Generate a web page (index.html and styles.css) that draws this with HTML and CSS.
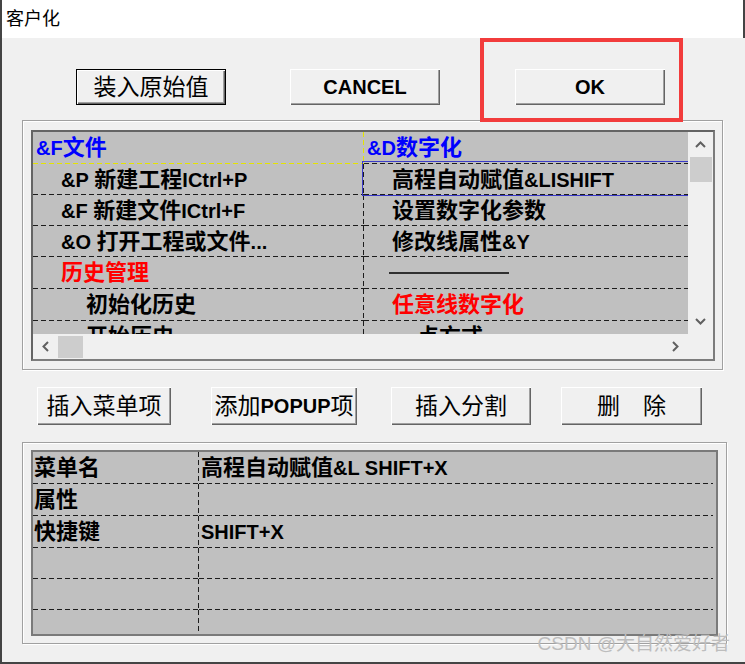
FILE: index.html
```html
<!DOCTYPE html>
<html lang="zh-CN">
<head>
    <meta charset="UTF-8">
    <meta name="viewport" content="width=device-width, initial-scale=1.0">
    <title>客户化</title>
    <link rel="stylesheet" href="styles.css">
</head>
<body>
    <div class="window">
        <div class="titlebar">客户化</div>
        <div class="dialog">
            <div class="top-actions">
                <button class="btn btn-default">装入原始值</button>
                <button class="btn btn-latin">CANCEL</button>
                <button class="btn btn-latin btn-ok">OK</button>
            </div>

            <div class="group group-menu">
                <div class="listbox">
                    <div class="menu-grid">
                        <div class="cell cell-l head lv0 blue"><span class="en">&amp;F</span>文件</div>
                        <div class="cell lv0 blue"><span class="en">&amp;D</span>数字化</div>

                        <div class="cell cell-l lv1"><span class="en">&amp;P&nbsp;</span>新建工程<span class="en">ICtrl+P</span></div>
                        <div class="cell lv1 focused">高程自动赋值<span class="en">&amp;LISHIFT</span></div>

                        <div class="cell cell-l lv1"><span class="en">&amp;F&nbsp;</span>新建文件<span class="en">ICtrl+F</span></div>
                        <div class="cell lv1">设置数字化参数</div>

                        <div class="cell cell-l lv1"><span class="en">&amp;O&nbsp;</span>打开工程或文件<span class="en">...</span></div>
                        <div class="cell lv1">修改线属性<span class="en">&amp;Y</span></div>

                        <div class="cell cell-l lv1 red">历史管理</div>
                        <div class="cell lv1"><span class="sep-line"></span></div>

                        <div class="cell cell-l lv2">初始化历史</div>
                        <div class="cell lv1 red">任意线数字化</div>

                        <div class="cell cell-l lv2">开始历史</div>
                        <div class="cell lv2">点方式</div>
                    </div>
                    <div class="vscroll">
                        <div class="arrow">
                            <svg width="11" height="7" viewBox="0 0 11 7"><path d="M1 6 L5.5 1.5 L10 6" fill="none" stroke="#606060" stroke-width="2"/></svg>
                        </div>
                        <div class="thumb"></div>
                        <div class="track"></div>
                        <div class="arrow">
                            <svg width="11" height="7" viewBox="0 0 11 7"><path d="M1 1 L5.5 5.5 L10 1" fill="none" stroke="#606060" stroke-width="2"/></svg>
                        </div>
                    </div>
                    <div class="hscroll">
                        <div class="arrow">
                            <svg width="7" height="11" viewBox="0 0 7 11"><path d="M6 1 L1.5 5.5 L6 10" fill="none" stroke="#606060" stroke-width="2"/></svg>
                        </div>
                        <div class="thumb"></div>
                        <div class="track"></div>
                        <div class="arrow">
                            <svg width="7" height="11" viewBox="0 0 7 11"><path d="M1 1 L5.5 5.5 L1 10" fill="none" stroke="#606060" stroke-width="2"/></svg>
                        </div>
                    </div>
                    <div class="corner"></div>
                </div>
            </div>

            <div class="mid-actions">
                <button class="btn btn-tall btn-insert">插入菜单项</button>
                <button class="btn btn-tall btn-popup">添加<span class="en-bold">POPUP</span>项</button>
                <button class="btn btn-tall btn-split">插入分割</button>
                <button class="btn btn-tall btn-delete">删　除</button>
            </div>

            <div class="group group-props">
                <div class="props-grid">
                    <div class="pcell pcell-l">菜单名</div>
                    <div class="pcell">高程自动赋值<span class="en">&amp;L SHIFT+X</span></div>

                    <div class="pcell pcell-l">属性</div>
                    <div class="pcell"></div>

                    <div class="pcell pcell-l">快捷键</div>
                    <div class="pcell"><span class="en">SHIFT+X</span></div>

                    <div class="pcell pcell-l"></div>
                    <div class="pcell"></div>

                    <div class="pcell pcell-l"></div>
                    <div class="pcell"></div>

                    <div class="pcell pcell-l last"></div>
                    <div class="pcell last"></div>
                </div>
            </div>

            <!-- annotation box drawn over the OK button -->
            <div class="highlight"></div>
            <div class="watermark">CSDN @大自然爱好者</div>
        </div>
    </div>
</body>
</html>
```

FILE: styles.css
```css
* {
    margin: 0;
    padding: 0;
    box-sizing: border-box;
}

body {
    background: #f0f0f0;
    font-family: "Liberation Sans", "Noto Sans CJK SC", sans-serif;
}

.window {
    width: 745px;
    height: 664px;
    display: flex;
    flex-direction: column;
    border-left: 2px solid #444;
    border-bottom: 2px solid #444;
    overflow: hidden;
}

.titlebar {
    height: 38px;
    flex: none;
    background: #fff;
    border-right: 2px solid #444;
    padding-left: 4px;
    font-size: 18px;
    line-height: 38px;
    color: #000;
}

.dialog {
    flex: 1;
    position: relative;
    background: #f0f0f0;
}

/* buttons */
.btn {
    width: 150px;
    height: 36px;
    flex: none;
    background: #f0f0f0;
    border: none;
    box-shadow: inset 1px 1px #fff, inset -1px -1px #646464, inset -2px -2px #a0a0a0;
    font-family: "Liberation Sans", "Noto Sans CJK SC", sans-serif;
    font-size: 23px;
    line-height: 1;
    color: #000;
    white-space: nowrap;
    display: flex;
    align-items: center;
    justify-content: center;
}

.btn-default {
    border: 1px solid #000;
}

.btn-latin {
    font-weight: bold;
    font-size: 20px;
}

.en-bold {
    font-weight: bold;
    font-size: 20px;
}

.top-actions {
    display: flex;
    gap: 64px;
    padding: 31px 0 0 74px;
}

.btn-ok {
    margin-left: 11px;
}

.mid-actions {
    display: flex;
    margin-top: 17px;
    padding-left: 35px;
}

.btn-tall {
    height: 38px;
}

.btn-insert { width: 134px; }
.btn-popup { width: 146px; margin-left: 40px; }
.btn-split { width: 140px; margin-left: 34px; }
.btn-delete { width: 141px; margin-left: 30px; }

/* etched group frames */
.group {
    margin-left: 20px;
    border: 1px solid #a0a0a0;
    box-shadow: 1px 1px 0 #fff, inset 1px 1px 0 #fff;
}

.group-menu {
    width: 701px;
    margin-top: 15px;
    padding: 9px 0 8px 8px;
}

.group-props {
    width: 705px;
    margin-top: 17px;
    padding: 7px 0 7px 8px;
}

/* menu list */
.listbox {
    width: 684px;
    height: 231px;
    border: 2px solid #7c7c7c;
    border-top-color: #646464;
    border-left-color: #646464;
    display: grid;
    grid-template-columns: 1fr 25px;
    grid-template-rows: 1fr 25px;
    background: #f0f0f0;
}

.menu-grid {
    overflow: hidden;
    background: #c0c0c0;
    display: grid;
    grid-template-columns: 331px 1fr;
    grid-template-rows: 32px repeat(3, 31px) repeat(3, 32px);
}

.cell, .pcell {
    --line: #1c1c1c;
    display: flex;
    align-items: center;
    white-space: nowrap;
    font-family: "Liberation Sans", "Noto Sans CJK SC", sans-serif;
    font-weight: bold;
    font-size: 22px;
    line-height: 1;
    color: #000;
    background: repeating-linear-gradient(90deg, var(--line) 0 5px, transparent 5px 8px) left bottom / 100% 1px no-repeat;
}

.cell-l, .pcell-l {
    background:
        repeating-linear-gradient(180deg, var(--line) 0 5px, transparent 5px 8px) right top / 1px 100% no-repeat,
        repeating-linear-gradient(90deg, var(--line) 0 5px, transparent 5px 8px) left bottom / 100% 1px no-repeat;
}

.head.cell-l {
    --line: #e4e400;
}

.en {
    font-size: 20px;
}

.lv0 { padding-left: 3px; }
.lv1 { padding-left: 28px; }
.lv2 { padding-left: 53px; }

.blue { color: #0000ff; }
.red { color: #ff0000; }

.sep-line {
    display: block;
    width: 120px;
    height: 2px;
    margin-left: -3px;
    background: #303030;
}

.focused {
    position: relative;
}

.focused::after {
    content: "";
    position: absolute;
    top: -3px;
    left: -2px;
    bottom: -1px;
    right: -10px;
    border: 1px solid #3a3ac8;
}

/* scroll bars */
.vscroll, .hscroll {
    display: flex;
    background: #f0f0f0;
}

.vscroll {
    flex-direction: column;
}

.arrow {
    width: 25px;
    height: 25px;
    flex: none;
    display: flex;
    align-items: center;
    justify-content: center;
}

.track {
    flex: 1;
}

.thumb {
    flex: none;
    background: #cdcdcd;
}

.vscroll .thumb {
    height: 25px;
    margin: 0 1px 0 2px;
}

.hscroll .thumb {
    width: 25px;
    margin: 2px 0 1px 0;
}

.corner {
    background: #f0f0f0;
}

/* properties grid */
.props-grid {
    width: 687px;
    height: 186px;
    border: 2px solid #7a7a7a;
    background: #c0c0c0;
    display: grid;
    grid-template-columns: 166px 1fr;
    grid-template-rows: 32px 32px 32px 31px 31px 1fr;
}

.pcell {
    padding-left: 2px;
    background-size: calc(100% - 3px) 1px;
}

.pcell-l {
    padding-left: 1px;
    background-size: 1px 100%, 100% 1px;
}

.pcell.last {
    background: none;
}

.pcell-l.last {
    background: repeating-linear-gradient(180deg, var(--line) 0 5px, transparent 5px 8px) right top / 1px 100% no-repeat;
}

/* overlays */
.highlight {
    position: absolute;
    top: 0;
    left: 478px;
    width: 203px;
    height: 84px;
    border: 4px solid #f23c3c;
}

.watermark {
    position: absolute;
    right: 15px;
    bottom: 7px;
    font-size: 19px;
    line-height: 22px;
    color: #bdbdbd;
    white-space: nowrap;
}
```
